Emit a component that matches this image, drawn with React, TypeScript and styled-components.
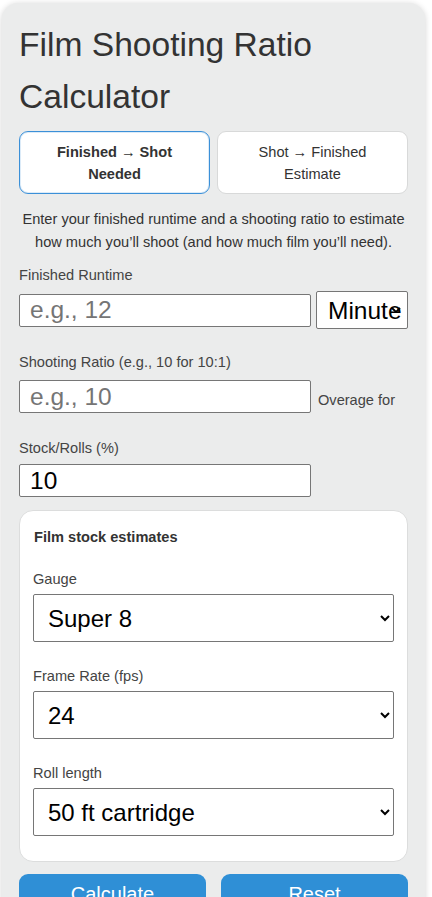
import React, { useState } from "react";
import styled, { createGlobalStyle } from "styled-components";

const Global = createGlobalStyle`
  html, body { margin: 0; padding: 0; background: #ffffff; }
  body { font-family: "Liberation Sans", Arial, sans-serif; color: #333; }
  * { box-sizing: border-box; }
`;

const chevron =
  "url(\"data:image/svg+xml;utf8,<svg xmlns='http://www.w3.org/2000/svg' width='10' height='6' viewBox='0 0 10 6'><path d='M1 1l4 4 4-4' fill='none' stroke='%23000' stroke-width='1.8'/></svg>\")";

const Page = styled.div`
  padding: 3px 7px 0 2px;
`;

const Panel = styled.main`
  background: #ebecec;
  border-radius: 16px 16px 0 0;
  box-shadow: 0 1px 6px rgba(0, 0, 0, 0.18);
  padding: 16px 17px 0 17px;
  min-height: 894px;
`;

const Title = styled.h1`
  margin: 0 0 8px;
  font-size: 33.6px;
  font-weight: 400;
  line-height: 52px;
  color: #333;
`;

const Toggle = styled.div`
  display: grid;
  grid-template-columns: 1fr 1fr;
  gap: 7px;
`;

const ToggleButton = styled.button<{ $active?: boolean }>`
  font-family: "Liberation Sans", Arial, sans-serif;
  font-size: 14.6px;
  line-height: 22px;
  height: 63px;
  padding: 0 14px;
  background: #fff;
  color: #333;
  font-weight: ${(p) => (p.$active ? 700 : 400)};
  border: 1px solid ${(p) => (p.$active ? "#3b90d8" : "#d8d9d9")};
  box-shadow: ${(p) => (p.$active ? "inset 0 0 0 1px rgba(59,144,216,0.18)" : "none")};
  border-radius: 9px;
  text-align: center;
`;

const Intro = styled.p`
  margin: 14px 0 12px;
  font-size: 14.6px;
  line-height: 22.5px;
  text-align: center;
  color: #333;
`;

const Label = styled.label<{ $after?: number }>`
  display: block;
  font-size: 14.6px;
  line-height: 20px;
  color: #444;
  margin: 0 0 ${(p) => p.$after ?? 6}px;
`;

const Row = styled.div<{ $gap?: number; $align?: string; $after?: number }>`
  display: flex;
  align-items: ${(p) => p.$align ?? "center"};
  gap: ${(p) => p.$gap ?? 5}px;
  margin-bottom: ${(p) => p.$after ?? 24}px;
`;

const TextInput = styled.input`
  width: 292px;
  height: 33px;
  font-family: "Liberation Sans", Arial, sans-serif;
  font-size: 24.5px;
  padding: 1px 10px;
  color: #000;
  background: #fff;
  border: 1px solid #767676;
  border-radius: 2px;
  &::placeholder { color: #757575; }
`;

const UnitSelect = styled.select`
  appearance: none;
  -webkit-appearance: none;
  width: 92px;
  height: 38px;
  font-family: "Liberation Sans", Arial, sans-serif;
  font-size: 24.5px;
  padding: 0 5px 0 11px;
  color: #000;
  background: #fff ${chevron} no-repeat right 6px center;
  border: 1px solid #767676;
  border-radius: 2px;
`;

const Aside = styled.span`
  font-size: 14.6px;
  color: #444;
`;

const StockCard = styled.section`
  background: #fff;
  border: 1px solid #dcdddd;
  border-radius: 14px;
  padding: 16px 13px 25px 13px;
  margin-top: 13px;
`;

const CardTitle = styled.h2`
  margin: 0 0 22px 1px;
  font-size: 14.6px;
  line-height: 20px;
  font-weight: 700;
  color: #333;
`;

const BigSelect = styled.select`
  display: block;
  width: 100%;
  height: 48px;
  font-family: "Liberation Sans", Arial, sans-serif;
  font-size: 24px;
  padding: 0 10px;
  color: #000;
  background: #fff;
  border: 1px solid #767676;
  border-radius: 2px;
  margin-bottom: 24px;
  &:last-of-type { margin-bottom: 0; }
`;

const Actions = styled.div`
  display: grid;
  grid-template-columns: 1fr 1fr;
  gap: 15px;
  margin-top: 12px;
`;

const ActionButton = styled.button`
  height: 40px;
  border: none;
  border-radius: 9px;
  background: #2f8fd6;
  color: #fff;
  font-family: "Liberation Sans", Arial, sans-serif;
  font-size: 20px;
`;

export default function App() {
  const [mode, setMode] = useState<"fwd" | "rev">("fwd");
  return (
    <Page>
      <Global />
      <Panel>
        <Title>Film Shooting Ratio Calculator</Title>
        <Toggle>
          <ToggleButton $active={mode === "fwd"} onClick={() => setMode("fwd")}>
            Finished → Shot Needed
          </ToggleButton>
          <ToggleButton $active={mode === "rev"} onClick={() => setMode("rev")}>
            Shot → Finished Estimate
          </ToggleButton>
        </Toggle>
        <Intro>
          Enter your finished runtime and a shooting ratio to estimate how much you’ll shoot (and how much film you’ll need).
        </Intro>

        <Label>Finished Runtime</Label>
        <Row $after={23}>
          <TextInput placeholder="e.g., 12" />
          <UnitSelect defaultValue="min">
            <option value="min">Minutes</option>
            <option value="sec">Seconds</option>
          </UnitSelect>
        </Row>

        <Label $after={8}>Shooting Ratio (e.g., 10 for 10:1)</Label>
        <Row $gap={7} $align="baseline" $after={25}>
          <TextInput placeholder="e.g., 10" />
          <Aside>Overage for</Aside>
        </Row>

        <Label>Stock/Rolls (%)</Label>
        <TextInput defaultValue="10" />

        <StockCard>
          <CardTitle>Film stock estimates</CardTitle>
          <Label $after={5}>Gauge</Label>
          <BigSelect defaultValue="s8">
            <option value="s8">Super 8</option>
            <option value="16">16mm</option>
            <option value="35">35mm</option>
          </BigSelect>
          <Label $after={5}>Frame Rate (fps)</Label>
          <BigSelect defaultValue="24">
            <option value="18">18</option>
            <option value="24">24</option>
            <option value="25">25</option>
          </BigSelect>
          <Label $after={5}>Roll length</Label>
          <BigSelect defaultValue="50">
            <option value="50">50 ft cartridge</option>
          </BigSelect>
        </StockCard>

        <Actions>
          <ActionButton>Calculate</ActionButton>
          <ActionButton>Reset</ActionButton>
        </Actions>
      </Panel>
    </Page>
  );
}
